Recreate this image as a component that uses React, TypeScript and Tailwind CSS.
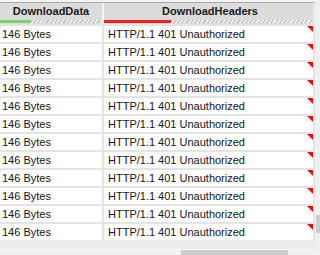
const ROWS = Array.from({ length: 12 }, (_, i) => i);

const hatch =
  "bg-[repeating-linear-gradient(135deg,#c4c4c4_0px,#c4c4c4_1.5px,#f6f6f6_1.5px,#f6f6f6_3px)]";

function RedFlag() {
  return (
    <svg className="absolute right-0 top-0" width="6" height="6" viewBox="0 0 6 6">
      <polygon points="0,0 6,0 6,6" fill="#ff0000" />
    </svg>
  );
}

export default function App() {
  return (
    <div
      className="flex h-[255px] w-[320px] overflow-hidden bg-[#f0f0f0] text-[11px] text-[#141414]"
      style={{ fontFamily: '"Liberation Sans", Arial, sans-serif' }}
    >
      <div className="flex w-[315px] flex-col">
        {/* top edge */}
        <div className="h-[2px] bg-[#f3f3f3]" />
        <div className="h-px bg-[#a8a8a8]" />

        {/* header */}
        <div className="flex h-[21px] bg-[#dcdcdc]">
          <div className="flex w-[102px] flex-col">
            <div className="flex h-[17px] items-center justify-center font-bold text-[#1a1a1a]">
              DownloadData
            </div>
            <div className="flex h-[3px]">
              <div className="w-[31px] bg-[#7fd56b]" />
              <div className={"flex-1 " + hatch} />
            </div>
          </div>
          <div className="w-[2px] bg-[#f4f4f4]" />
          <div className="flex flex-1 flex-col">
            <div className="flex h-[17px] items-center justify-center pl-[3px] font-bold text-[#1a1a1a]">
              DownloadHeaders
            </div>
            <div className="flex h-[3px]">
              <div className="w-[67px] bg-[#f02222]" />
              <div className={"flex-1 " + hatch} />
            </div>
          </div>
          <div className="w-[2px] bg-[#ececec]" />
        </div>

        {/* rows */}
        <div className="flex flex-col bg-[#e4e4e4]">
          {ROWS.map((i) => (
            <div key={i} className="flex h-[18px] border-t-2 border-[#e4e4e4]">
              <div className="flex w-[102px] items-center bg-white pl-[2px]">146 Bytes</div>
              <div className="w-[2px] bg-[#e4e4e4]" />
              <div className="relative flex flex-1 items-center bg-white pl-[4px]">
                HTTP/1.1 401 Unauthorized
                <RedFlag />
              </div>
              <div className="w-[2px] bg-[#e4e4e4]" />
            </div>
          ))}
        </div>

        {/* empty space + horizontal scrollbar */}
        <div className="h-[9px] bg-[#ececec]" />
        <div className="h-px bg-[#f8f8f8]" />
        <div className="flex h-[5px] bg-[#f0f0f0]">
          <div className="ml-[181px] w-[107px] bg-[#cdcdcd]" />
        </div>
      </div>

      {/* vertical scrollbar */}
      <div className="flex w-[5px] flex-col bg-[#f0f0f0]">
        <div className="ml-px mt-[215px] h-[18px] w-[4px] bg-[#cdcdcd]" />
      </div>
    </div>
  );
}
